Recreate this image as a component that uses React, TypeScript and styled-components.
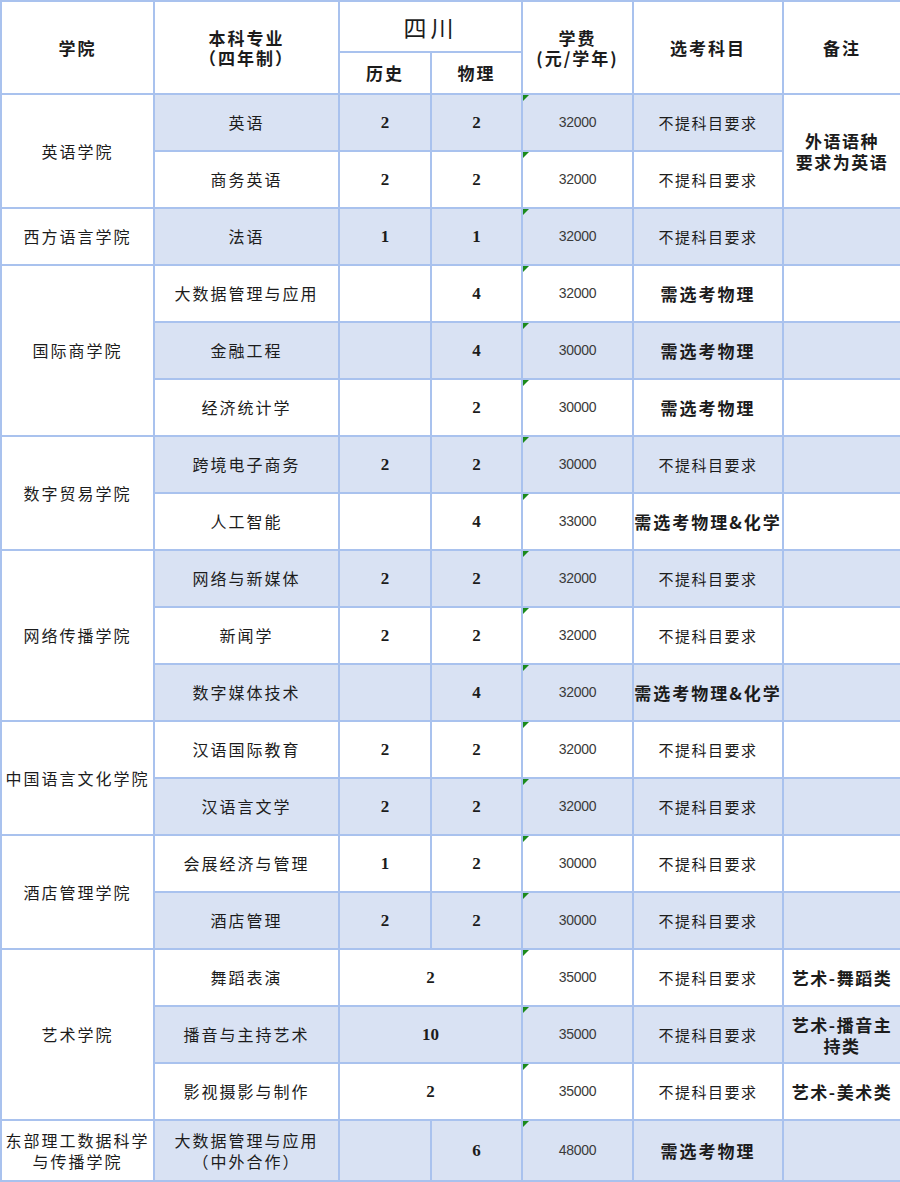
import styled, { createGlobalStyle } from 'styled-components';

const GlobalStyle = createGlobalStyle`
  html, body {
    margin: 0;
    padding: 0;
    background: #ffffff;
  }
  body {
    font-family: "Noto Sans CJK SC", "Noto Sans", sans-serif;
    color: #1c1c1c;
  }
`;

const LINE = '#a9c2ee';
const SHADE = '#d9e2f3';

const Sheet = styled.table`
  width: 900px;
  table-layout: fixed;
  border-collapse: collapse;
  border: 2px solid ${LINE};
`;

const HeadRow = styled.tr<{ $h: number }>`
  height: ${(p) => p.$h}px;
`;

const BodyRow = styled.tr<{ $h: number }>`
  height: ${(p) => p.$h}px;
`;

const HeadCell = styled.th`
  border: 2px solid ${LINE};
  background: #ffffff;
  font-size: 17px;
  font-weight: 700;
  letter-spacing: 2px;
  line-height: 20px;
  text-align: center;
  vertical-align: middle;
  padding: 0;
  white-space: pre-line;
`;

const ProvinceCell = styled(HeadCell)`
  font-size: 23px;
  font-weight: 400;
  letter-spacing: 4px;
`;

const Cell = styled.td<{ $shade?: boolean }>`
  position: relative;
  border: 2px solid ${LINE};
  background: ${(p) => (p.$shade ? SHADE : '#ffffff')};
  text-align: center;
  vertical-align: middle;
  padding: 0 2px;
  font-size: 16px;
  letter-spacing: 2px;
  line-height: 21px;
  white-space: pre-line;
`;

const CollegeCell = styled(Cell)`
  background: #ffffff;
  padding: 0;
`;

const MajorCell = styled(Cell)``;

const ScoreCell = styled(Cell)`
  font-family: "Liberation Serif", "DejaVu Serif", serif;
  font-weight: 700;
  font-size: 17px;
  letter-spacing: 0;
`;

const FeeCell = styled(Cell)`
  font-family: "Liberation Sans", Arial, sans-serif;
  font-size: 14px;
  letter-spacing: -0.3px;
  color: #3a3a3a;
`;

const SubjectCell = styled(Cell)<{ $bold?: boolean }>`
  font-size: ${(p) => (p.$bold ? '17px' : '15px')};
  font-weight: ${(p) => (p.$bold ? 700 : 400)};
  letter-spacing: ${(p) => (p.$bold ? '2px' : '1.5px')};
  padding: 0;
`;

const RemarkCell = styled(Cell)`
  font-size: 17px;
  font-weight: 700;
  letter-spacing: 1.5px;
  line-height: 21px;
  padding: 0;
`;

const TextFlag = styled.span`
  position: absolute;
  top: 0;
  left: 0;
  width: 0;
  height: 0;
  border-top: 6px solid #1b8a1b;
  border-right: 6px solid transparent;
`;

type Row = {
  college?: { name: string; span: number };
  major: string;
  hist?: string;
  phys?: string;
  both?: string;
  fee: string;
  subject: string;
  strong?: boolean;
  remark?: { text: string; span: number; white?: boolean } | 'covered';
};

const NOT = '不提科目要求';
const PHY = '需选考物理';
const PHC = '需选考物理&化学';

const rows: Row[] = [
  { college: { name: '英语学院', span: 2 }, major: '英语', hist: '2', phys: '2', fee: '32000', subject: NOT, remark: { text: '外语语种\n要求为英语', span: 2, white: true } },
  { major: '商务英语', hist: '2', phys: '2', fee: '32000', subject: NOT, remark: 'covered' },
  { college: { name: '西方语言学院', span: 1 }, major: '法语', hist: '1', phys: '1', fee: '32000', subject: NOT },
  { college: { name: '国际商学院', span: 3 }, major: '大数据管理与应用', phys: '4', fee: '32000', subject: PHY, strong: true },
  { major: '金融工程', phys: '4', fee: '30000', subject: PHY, strong: true },
  { major: '经济统计学', phys: '2', fee: '30000', subject: PHY, strong: true },
  { college: { name: '数字贸易学院', span: 2 }, major: '跨境电子商务', hist: '2', phys: '2', fee: '30000', subject: NOT },
  { major: '人工智能', phys: '4', fee: '33000', subject: PHC, strong: true },
  { college: { name: '网络传播学院', span: 3 }, major: '网络与新媒体', hist: '2', phys: '2', fee: '32000', subject: NOT },
  { major: '新闻学', hist: '2', phys: '2', fee: '32000', subject: NOT },
  { major: '数字媒体技术', phys: '4', fee: '32000', subject: PHC, strong: true },
  { college: { name: '中国语言文化学院', span: 2 }, major: '汉语国际教育', hist: '2', phys: '2', fee: '32000', subject: NOT },
  { major: '汉语言文学', hist: '2', phys: '2', fee: '32000', subject: NOT },
  { college: { name: '酒店管理学院', span: 2 }, major: '会展经济与管理', hist: '1', phys: '2', fee: '30000', subject: NOT },
  { major: '酒店管理', hist: '2', phys: '2', fee: '30000', subject: NOT },
  { college: { name: '艺术学院', span: 3 }, major: '舞蹈表演', both: '2', fee: '35000', subject: NOT, remark: { text: '艺术-舞蹈类', span: 1 } },
  { major: '播音与主持艺术', both: '10', fee: '35000', subject: NOT, remark: { text: '艺术-播音主\n持类', span: 1 } },
  { major: '影视摄影与制作', both: '2', fee: '35000', subject: NOT, remark: { text: '艺术-美术类', span: 1 } },
  { college: { name: '东部理工数据科学\n与传播学院', span: 1 }, major: '大数据管理与应用\n（中外合作）', phys: '6', fee: '48000', subject: PHY, strong: true },
];

const widths = [153, 185, 92, 91, 111, 150, 118];

function App() {
  return (
    <>
      <GlobalStyle />
      <Sheet>
        <colgroup>
          {widths.map((w, i) => (
            <col key={i} style={{ width: w }} />
          ))}
        </colgroup>
        <thead>
          <HeadRow $h={51}>
            <HeadCell rowSpan={2}>学院</HeadCell>
            <HeadCell rowSpan={2}>{'本科专业\n（四年制）'}</HeadCell>
            <ProvinceCell colSpan={2}>四川</ProvinceCell>
            <HeadCell rowSpan={2}>{'学费\n(元/学年)'}</HeadCell>
            <HeadCell rowSpan={2}>选考科目</HeadCell>
            <HeadCell rowSpan={2}>备注</HeadCell>
          </HeadRow>
          <HeadRow $h={42}>
            <HeadCell>历史</HeadCell>
            <HeadCell>物理</HeadCell>
          </HeadRow>
        </thead>
        <tbody>
          {rows.map((r, i) => {
            const shade = i % 2 === 0;
            return (
              <BodyRow key={i} $h={i === rows.length - 1 ? 61 : 57}>
                {r.college && <CollegeCell rowSpan={r.college.span}>{r.college.name}</CollegeCell>}
                <MajorCell $shade={shade}>{r.major}</MajorCell>
                {r.both ? (
                  <ScoreCell $shade={shade} colSpan={2}>{r.both}</ScoreCell>
                ) : (
                  <>
                    <ScoreCell $shade={shade}>{r.hist ?? ''}</ScoreCell>
                    <ScoreCell $shade={shade}>{r.phys ?? ''}</ScoreCell>
                  </>
                )}
                <FeeCell $shade={shade}>
                  <TextFlag />
                  {r.fee}
                </FeeCell>
                <SubjectCell $shade={shade} $bold={r.strong}>{r.subject}</SubjectCell>
                {r.remark === 'covered' ? null : r.remark ? (
                  <RemarkCell $shade={r.remark.white ? false : shade} rowSpan={r.remark.span}>
                    {r.remark.text}
                  </RemarkCell>
                ) : (
                  <RemarkCell $shade={shade} />
                )}
              </BodyRow>
            );
          })}
        </tbody>
      </Sheet>
    </>
  );
}

export default App;
